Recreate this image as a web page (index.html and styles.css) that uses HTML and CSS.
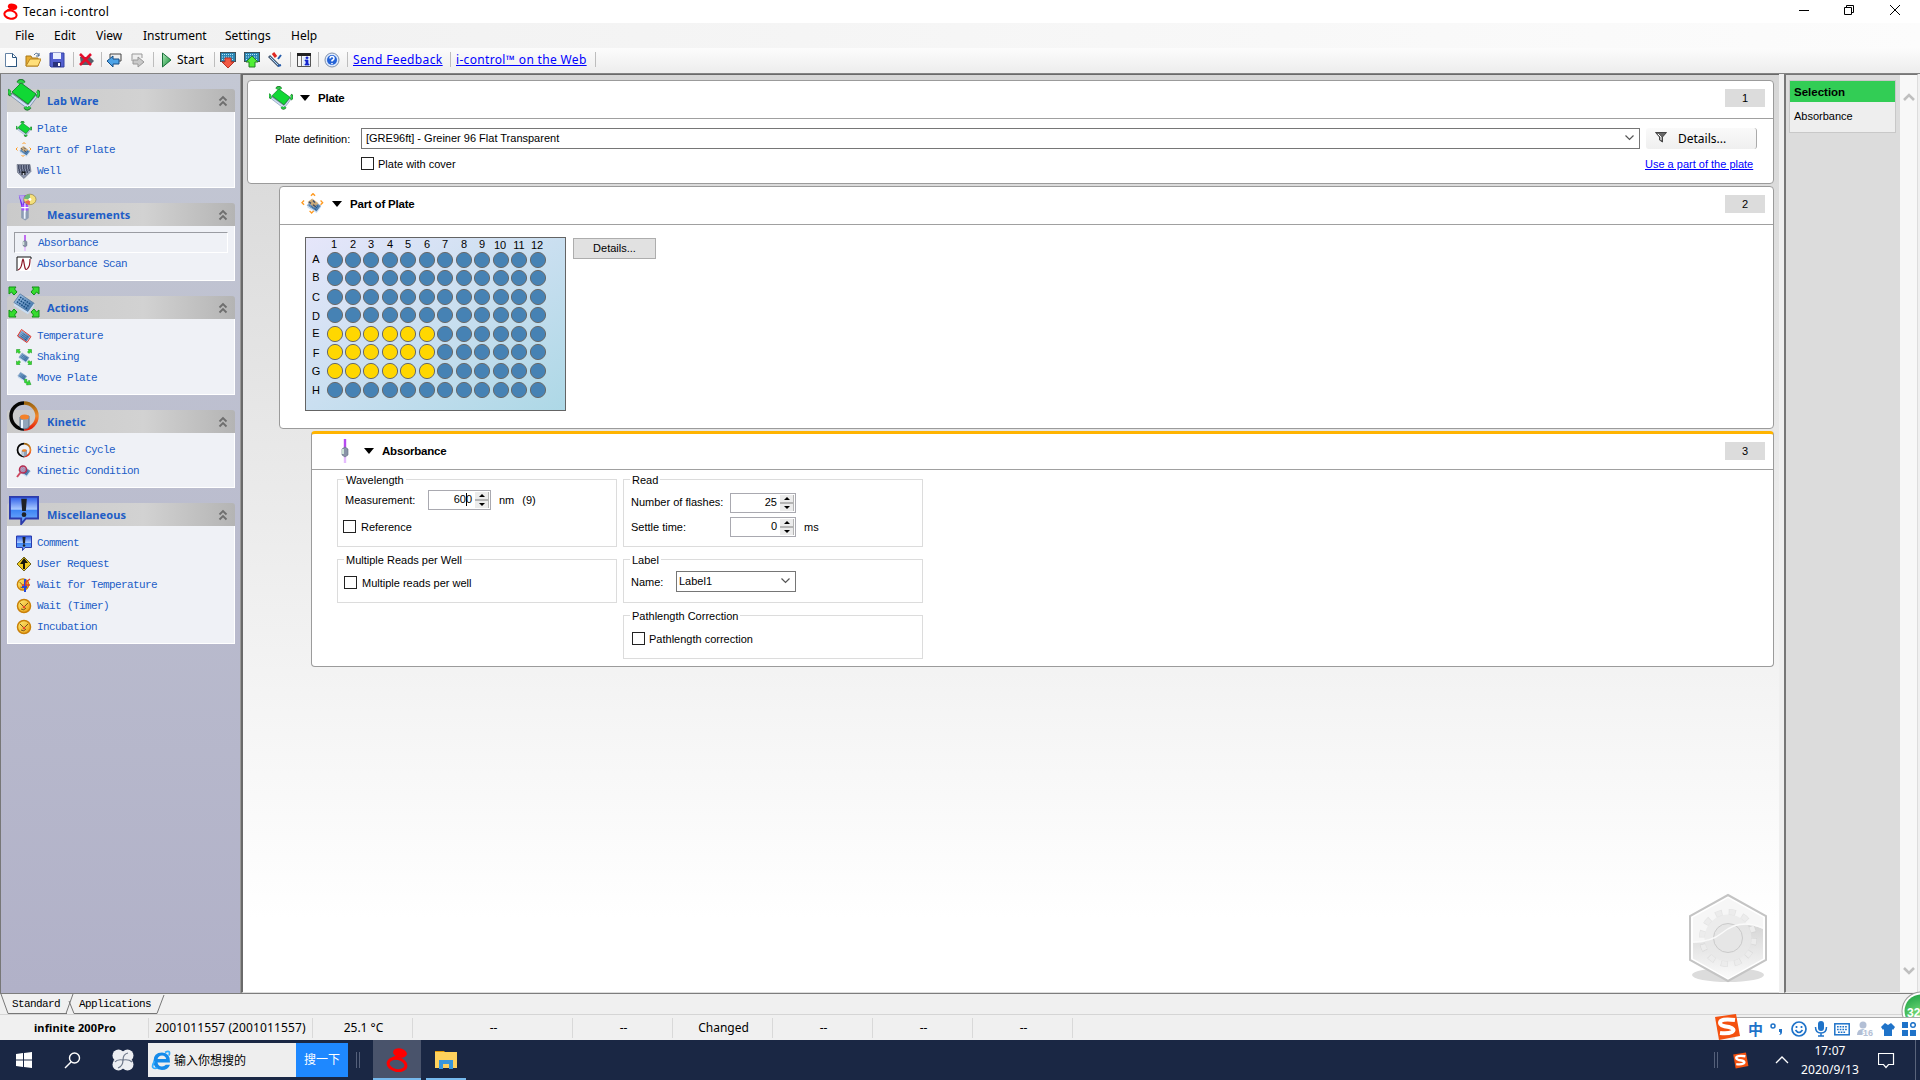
FILE: index.html
```html
<!DOCTYPE html>
<html lang="en">
<head>
<meta charset="utf-8">
<title>Tecan i-control</title>
<link rel="stylesheet" href="styles.css">
</head>
<body>
<svg class="defs" width="0" height="0">
<defs>
<linearGradient id="gSteel" x1="0" y1="0" x2="1" y2="1"><stop offset="0" stop-color="#a9cbee"/><stop offset="1" stop-color="#34699f"/></linearGradient>
<linearGradient id="gBlue" x1="0" y1="0" x2="0" y2="1"><stop offset="0" stop-color="#2a5be8"/><stop offset=".45" stop-color="#a8c8ff"/><stop offset=".5" stop-color="#3f86f5"/><stop offset="1" stop-color="#7db4ff"/></linearGradient>
<linearGradient id="gGold" x1="0" y1="0" x2="1" y2="1"><stop offset="0" stop-color="#fff07a"/><stop offset="1" stop-color="#e89a10"/></linearGradient>
<linearGradient id="gPlay" x1="0" y1="0" x2="1" y2="1"><stop offset="0" stop-color="#b5ecc0"/><stop offset="1" stop-color="#078a2c"/></linearGradient>
<linearGradient id="gWell" x1="0" y1="0" x2="1" y2="1"><stop offset="0" stop-color="#e6e6fa"/><stop offset="1" stop-color="#add8e6"/></linearGradient>
<linearGradient id="gRing" x1="0" y1="0" x2="0" y2="1"><stop offset="0" stop-color="#9a6410"/><stop offset=".5" stop-color="#f0882a"/><stop offset="1" stop-color="#e61c08"/></linearGradient>
<linearGradient id="gHex" x1="0" y1="0" x2="0" y2="1"><stop offset="0" stop-color="#d6d6d6"/><stop offset="1" stop-color="#fafafa"/></linearGradient>
<radialGradient id="gBall" cx=".5" cy=".75" r=".8"><stop offset="0" stop-color="#8ae884"/><stop offset="1" stop-color="#21a447"/></radialGradient>
<symbol id="plate" viewBox="0 0 32 32">
<path d="M13 4 29 16 20 27 3 15Z" fill="#76838a"/><path d="M3 14 20 26 29 15v3L20 30 3 17Z" fill="#cfe0f6" stroke="#7489a3" stroke-width=".8"/><path d="M13 4 28 15 20 25 4 13Z" fill="#10d835" stroke="#178e30"/>
<path d="M10 4q3-5 6 0M2 11q-3 3 1 5M29 12q4 2 0 6M17 28q2 4 5 0" fill="none" stroke="#287d35" stroke-width="3.6"/><path d="M10 4q3-4 6 0M2 11q-2 3 1 5M29 12q3 2 0 6M17 28q2 3 5 0" fill="none" stroke="#26d544" stroke-width="2"/>
</symbol>
<symbol id="tray" viewBox="0 0 32 32"><path d="M11 5 29 17 21 28 3 16Z" fill="url(#gSteel)" stroke="#55779e"/><path d="m11 9 13 9M9 12l13 9M7 15l13 9" stroke="#174b7e" stroke-width="2" stroke-dasharray="2 1.4"/><path d="M3 17v3l18 11 8-11v-3L21 28Z" fill="#c8ddf3"/></symbol>
<symbol id="part" viewBox="0 0 32 32"><use href="#tray" x="5" y="6" width="25" height="24"/><path d="m8 13 7-5 9 7-6 6Z" fill="#d9ad6d" opacity=".85"/><path d="m13 4 3-3 3 3M3 11l-3 3 3 3M27 11l3 3-3 3M11 26l3 3 3-3" fill="none" stroke="#ff9a20" stroke-width="2"/><path d="m10 13 3 2m3-4 3 3m-3 3 4 3" stroke="#374a6c" stroke-width="2"/></symbol>
<symbol id="well" viewBox="0 0 32 32"><path d="M2 3h26l2 14-14 14L3 19Z" fill="#8d96ad" stroke="#4a5061"/><path d="M4 6h23M4 10h24M5 14h23M6 18h20" stroke="#303951" stroke-width="2.600" stroke-dasharray="3 2"/><path d="M11 17h8v7h-8z" fill="#16181d"/><circle cx="15" cy="22" r="2" fill="#d6dce9"/></symbol>
<symbol id="measure" viewBox="0 0 32 48"><path d="M2 4h18l-4 22H7Z" fill="#6c25ee"/><path d="m2 4 7 17 3-17Z" fill="#b8a4f0"/><path d="M6 24h13v19l-6 4-7-4Z" fill="#8d9db4"/><path d="M9 26h3v18" stroke="#eef5ff" stroke-width="3" fill="none"/><path d="M7 20h11v10H7Z" fill="#a54cff"/><path d="M12.500 17v16M6 25h13" stroke="#fff" stroke-width="2"/><ellipse cx="21" cy="11" rx="10.500" ry="9" fill="#f3df7b" stroke="#84702c"/><path d="m21 11-10-1q1-8 10-8Z" fill="#68b97a"/><path d="m21 11-9 4q4 5 9 5Z" fill="#e86c4c"/><circle cx="21" cy="11" r="2.500" fill="#fff"/></symbol>
<symbol id="absorb" viewBox="0 0 16 24"><path d="M8 0v12" stroke="#b54af0" stroke-width="2.400"/><path d="M8 16v8" stroke="#e6bcff" stroke-width="2.400"/><path d="m5 10 3-2 3 2v6l-3 2-3-2Z" fill="#8993a7" stroke="#606b80" stroke-width=".6"/><path d="M6 10v5" stroke="#d5ecdc" stroke-width="1.800"/></symbol>
<symbol id="scan" viewBox="0 0 16 16"><path d="M1 1h14v14H1Z" fill="#fff"/><path d="M1 15V1h14v2" fill="none" stroke="#111"/><path d="M2 14Q5 13 6 7q1-8 2 0l1 5q1 3 3 0 2-2 2-9" fill="none" stroke="#8b1525" stroke-width="1.200"/></symbol>
<symbol id="corner" viewBox="0 0 10 10"><path d="M1 1h7L6.500 3 9 6 6 9 3.500 6 1 8Z" fill="#35dc2e" stroke="#139117"/></symbol>
<symbol id="shake" viewBox="0 0 32 32"><use href="#tray" x="3" y="4" width="26" height="25"/><use href="#corner" width="10" height="10"/><use href="#corner" width="10" height="10" transform="matrix(-1 0 0 1 32 0)"/><use href="#corner" width="10" height="10" transform="matrix(1 0 0 -1 0 32)"/><use href="#corner" width="10" height="10" transform="matrix(-1 0 0 -1 32 32)"/></symbol>
<symbol id="temp" viewBox="0 0 32 32"><use href="#tray" x="1" y="1" width="30" height="30"/><path d="m11 3 19 14-8 12L3 16Z" fill="none" stroke="#e13329" stroke-width="2"/></symbol>
<symbol id="move" viewBox="0 0 32 32"><use href="#tray" x="0" y="1" width="25" height="22"/><path d="m17 18 5 1-1 4 4 1 1-4 4 9-9 1 1-3-5-2Z" fill="#34dc38" stroke="#16941f"/></symbol>
<symbol id="kinetic" viewBox="0 0 32 32"><path d="M16 3a13 13 0 0 0 0 26" fill="none" stroke="#050505" stroke-width="3.500"/><path d="M16 3a13 13 0 0 1 0 26" fill="none" stroke="url(#gRing)" stroke-width="3.500"/><path d="M12 17v10q5 4 9 0V16Z" fill="#91a5bb" stroke="#62758b"/><ellipse cx="16.500" cy="17" rx="4.500" ry="2.500" fill="#f58228"/><path d="M14 20v8" stroke="#eef6ff" stroke-width="2"/></symbol>
<symbol id="condition" viewBox="0 0 32 32"><use href="#tray" x="3" y="1" width="28" height="28"/><circle cx="14" cy="13" r="7" fill="#f29bb6" fill-opacity=".5" stroke="#b52d52" stroke-width="3"/><path d="m9 19-7 9" stroke="#cf4860" stroke-width="4"/></symbol>
<symbol id="comment" viewBox="0 0 32 32"><path d="M1 2h30v23H18l-5 6v-6H1Z" fill="url(#gBlue)" stroke="#2c3bab" stroke-width="2"/><path d="M13 4h6l-1 13h-4Z" fill="#202226"/><circle cx="16" cy="21" r="2.500" fill="#202226"/></symbol>
<symbol id="request" viewBox="0 0 16 16"><path d="m8 1 7 7-7 7-7-7Z" fill="#efc920" stroke="#6e6219"/><path d="m8 2 4 5H9v6H7V8H4Z" fill="#17170d"/></symbol>
<symbol id="timer" viewBox="0 0 16 16"><circle cx="8" cy="8" r="6.500" fill="url(#gGold)" stroke="#c98009" stroke-width="1.500"/><path d="m4 5 4 4 4-4M5 11q3 2 5-1" fill="none" stroke="#74521b"/><circle cx="8" cy="9" r="1.300" fill="#e7472e"/></symbol>
<symbol id="waittemp" viewBox="0 0 16 16"><use href="#timer" width="14" height="15"/><path d="M9 2v13M6 10h5" stroke="#264ad9" stroke-width="2"/><path d="M10 9V5l4-3m-4 6h4" fill="none" stroke="#e3402b" stroke-width="1.500"/></symbol>
<symbol id="tecan" viewBox="0 0 22 24"><ellipse cx="14" cy="5" rx="7" ry="4.500" fill="#f00" transform="rotate(12 14 5)"/><ellipse cx="11" cy="16.500" rx="9" ry="6" fill="none" stroke="#f00" stroke-width="3" transform="rotate(12 11 16.500)"/><path d="M4 13q2-4 9-5" fill="none" stroke="#f00" stroke-width="2"/></symbol>
<symbol id="sogou" viewBox="0 0 28 28"><path d="M2 4 23 1l4 22-21 4Z" fill="#f4510f"/><path d="M22 7Q7 5 7 10q0 3 9 4 7 2 3 5-4 2-12 1" fill="none" stroke="#fff" stroke-width="4"/></symbol>
<symbol id="chev" viewBox="0 0 10 12"><path d="m1.500 5.500 3.500-3.500 3.500 3.500M1.500 10.500 5 7l3.500 3.500" fill="none" stroke="#6e6e6e" stroke-width="1.800"/></symbol>
<symbol id="wellgrid" viewBox="0 0 16 10"><path d="M0 0h16v10H0Z" fill="#2a86b4" stroke="#444" stroke-width="1.500"/><path d="M2 2.500h12M2 5h12M2 7.500h12" stroke="#b6e5fb" stroke-width="1" stroke-dasharray="1 1"/></symbol>
<g id="half"><circle cx="30" r="7.600"/><circle cx="48" r="7.600"/><circle cx="66" r="7.600"/><circle cx="85" r="7.600"/><circle cx="103" r="7.600"/><circle cx="122" r="7.600"/></g>
<g id="half2"><circle cx="140" r="7.600"/><circle cx="159" r="7.600"/><circle cx="177" r="7.600"/><circle cx="196" r="7.600"/><circle cx="214" r="7.600"/><circle cx="233" r="7.600"/></g>
</defs>
</svg>

<div class="window">
<header class="titlebar">
<svg class="logo" width="15" height="17"><use href="#tecan"/></svg><span>Tecan i-control</span>
<svg class="winbtns" width="120" height="23" fill="none" stroke="#000"><path d="M4 10.500h10M49.500 7.500h7v7h-7zM51.500 7V5.500h7v7H57M95 5l10 10m0-10L95 15"/></svg>
</header>
<nav class="menu"><span>File</span><span>Edit</span><span>View</span><span>Instrument</span><span>Settings</span><span>Help</span></nav>
<div class="toolbar">
<svg viewBox="0 0 16 16"><path d="M2.500 1.500h7l4 4v9h-11Z" fill="#fff" stroke="#6482a4"/><path d="M9.500 1.500v4h4M13.500 6v8.500H5" fill="none" stroke="#29547e"/></svg>
<svg viewBox="0 0 16 16"><path d="M1 14V4h5l1 2h6v8Z" fill="#e7ad32" stroke="#a97816"/><path d="m1 14 4-7h11l-3 7Z" fill="#ffdf79" stroke="#b98522"/><path d="M9 3q3-4 5 1m0-3v3h-3" fill="none" stroke="#506e91"/></svg>
<svg viewBox="0 0 16 16"><path d="M1 1h14v14H2l-1-1Z" fill="#5360d0" stroke="#3442a4"/><path d="M4 1h8v6H4Z" fill="#eaf0ff"/><path d="M4 10h8v5H4Z" fill="#29327a"/><path d="M9 11h2v3H9Z" fill="#fff"/></svg>
<i></i>
<svg viewBox="0 0 16 16"><path d="M2 5h10l4 4-4 4H3Z" fill="#57616b"/><path d="m2 2 11 11m0-11L2 13" stroke="#e40d2b" stroke-width="2.600"/></svg>
<i></i>
<svg viewBox="0 0 16 16"><path d="M4 6V2h11v7h-3" fill="#eee" stroke="#444"/><path d="m1 9 6-5v3h6v5H7v3Z" fill="#4da3e7" stroke="#164d84"/></svg>
<svg viewBox="0 0 16 16"><path d="M2 9V2h10v4" fill="#eee" stroke="#999"/><path d="M14 10 8 5v3H3v4h5v3Z" fill="#c9c9c9" stroke="#989898"/></svg>
<i></i>
<svg viewBox="0 0 16 16"><path d="m2.500 1 8.500 7-8.500 7Z" fill="url(#gPlay)" stroke="#1b703b"/></svg>
<span>Start</span>
<i></i>
<svg viewBox="0 0 16 16"><use href="#wellgrid" width="16" height="10"/><path d="M5 6h6v4h3l-6 6-6-6h3Z" fill="#f25a45" stroke="#ba3327"/></svg>
<svg viewBox="0 0 16 16"><use href="#wellgrid" width="16" height="10"/><path d="M5 15h6v-5h3L8 4l-6 6h3Z" fill="#50ef34" stroke="#257f28"/></svg>
<svg viewBox="0 0 16 16"><path d="m2 4 10 10" stroke="#4a5d77" stroke-width="3"/><path d="m3 5 9 9" stroke="#a8d7ff"/><path d="m6 1 3 4" stroke="#df2720" stroke-width="3"/><path d="m11 7 3-4M11 14l3-1" stroke="#265cab" stroke-width="2"/></svg>
<i></i>
<svg viewBox="0 0 16 16"><path d="M1.500 1.500h13v13h-13Z" fill="#f7f7f7" stroke="#555"/><path d="M1 2.500h14" stroke="#222" stroke-width="3"/><path d="M5.500 4v10" stroke="#777"/><path d="M7 5h7v9H7Z" fill="#dceaff"/><path d="M10 5h2v1.500h-2zM9 8h3v4h1v1H9v-1h1V9H9Z" fill="#1525cc" stroke="#1525cc" stroke-width=".7"/></svg>
<i></i>
<svg viewBox="0 0 16 16"><circle cx="8" cy="8" r="7" fill="#dceaff" stroke="#8291aa"/><circle cx="8" cy="8" r="5" fill="#2462d6"/><path d="M6 6.500q0-2 2-2t2 2q0 1-2 2v1M8 11v1.300" fill="none" stroke="#fff" stroke-width="1.500"/></svg>
<i></i>
<a class="fb">Send Feedback</a><i></i><a class="web">i-control™ on the Web</a><i></i>
</div>

<div class="workspace">
<aside class="side">
<section class="grp"><h2><svg class="big" width="32" height="32"><use href="#plate"/></svg>Lab Ware<svg class="up" width="10" height="12"><use href="#chev"/></svg></h2>
<ul><li><svg width="16" height="16"><use href="#plate"/></svg>Plate</li><li><svg width="16" height="16"><use href="#part"/></svg>Part of Plate</li><li><svg width="16" height="16"><use href="#well"/></svg>Well</li></ul></section>
<section class="grp"><h2><svg class="big tube" width="22" height="28" preserveAspectRatio="none"><use href="#measure"/></svg>Measurements<svg class="up" width="10" height="12"><use href="#chev"/></svg></h2>
<ul><li class="sel"><svg width="16" height="16"><use href="#absorb"/></svg>Absorbance</li><li><svg width="16" height="16"><use href="#scan"/></svg>Absorbance Scan</li></ul></section>
<section class="grp"><h2><svg class="big" width="32" height="32"><use href="#shake"/></svg>Actions<svg class="up" width="10" height="12"><use href="#chev"/></svg></h2>
<ul><li><svg width="16" height="16"><use href="#temp"/></svg>Temperature</li><li><svg width="16" height="16"><use href="#shake"/></svg>Shaking</li><li><svg width="16" height="16"><use href="#move"/></svg>Move Plate</li></ul></section>
<section class="grp"><h2><svg class="big" width="32" height="32"><use href="#kinetic"/></svg>Kinetic<svg class="up" width="10" height="12"><use href="#chev"/></svg></h2>
<ul><li><svg width="16" height="16"><use href="#kinetic"/></svg>Kinetic Cycle</li><li><svg width="16" height="16"><use href="#condition"/></svg>Kinetic Condition</li></ul></section>
<section class="grp"><h2><svg class="big" width="32" height="30"><use href="#comment"/></svg>Miscellaneous<svg class="up" width="10" height="12"><use href="#chev"/></svg></h2>
<ul><li><svg width="16" height="16"><use href="#comment"/></svg>Comment</li><li><svg width="16" height="16"><use href="#request"/></svg>User Request</li><li><svg width="16" height="16"><use href="#waittemp"/></svg>Wait for Temperature</li><li><svg width="16" height="16"><use href="#timer"/></svg>Wait (Timer)</li><li><svg width="16" height="16"><use href="#timer"/></svg>Incubation</li></ul></section>
</aside>

<main class="canvas">
<section class="card c1">
<header><svg class="ico" width="24" height="24"><use href="#plate"/></svg><b class="tri"></b><h3>Plate</h3><span class="num">1</span></header>
<div class="platedef">
<label>Plate definition:</label>
<div class="select wide">[GRE96ft] - Greiner 96 Flat Transparent<svg width="9" height="6"><path d="m.5.500 4 4 4-4" fill="none" stroke="#555" stroke-width="1.200"/></svg></div>
<div class="softbtn"><svg width="12" height="11"><path d="M.5.500h11L7.500 5v5L4.500 8V5Z" fill="#666" stroke="#444"/><path d="m3 2 3 3v3" stroke="#fff" fill="none"/></svg>Details...</div>
<div class="check withcover"><b class="box"></b>Plate with cover</div>
<a class="partlink">Use a part of the plate</a>
</div>
</section>
<section class="card c2">
<header><svg class="ico" width="24" height="22"><use href="#part"/></svg><b class="tri"></b><h3>Part of Plate</h3><span class="num">2</span></header>
<div class="platearea">
<svg class="wells" width="261" height="174">
<rect x=".5" y=".5" width="260" height="173" fill="url(#gWell)" stroke="#646464"/>
<g fill="#4682b4" stroke="#696969">
<use href="#half" y="23"/><use href="#half" y="41"/><use href="#half" y="60"/><use href="#half" y="78"/><use href="#half" y="153"/>
<use href="#half2" y="23"/><use href="#half2" y="41"/><use href="#half2" y="60"/><use href="#half2" y="78"/><use href="#half2" y="97"/><use href="#half2" y="115"/><use href="#half2" y="134"/><use href="#half2" y="153"/></g>
<g fill="#ffd700" stroke="#696969"><use href="#half" y="97"/><use href="#half" y="115"/><use href="#half" y="134"/></g>
<g class="wl"><text x="29" y="11">1</text><text x="48" y="11">2</text><text x="66" y="11">3</text><text x="85" y="11">4</text><text x="103" y="11">5</text><text x="122" y="11">6</text><text x="140" y="11">7</text><text x="159" y="11">8</text><text x="177" y="11">9</text><text x="195" y="12">10</text><text x="214" y="12">11</text><text x="232" y="12">12</text>
<text x="11" y="26">A</text><text x="11" y="44">B</text><text x="11" y="64">C</text><text x="11" y="83">D</text><text x="11" y="100">E</text><text x="11" y="120">F</text><text x="11" y="138">G</text><text x="11" y="157">H</text></g>
</svg>
<div class="btn">Details...</div>
</div>
</section>
<section class="card c3">
<header><svg class="ico" width="24" height="24"><use href="#absorb"/></svg><b class="tri"></b><h3>Absorbance</h3><span class="num">3</span></header>
<div class="groups">
<div class="col">
<div class="fs tall"><span class="lg">Wavelength</span>
<div class="row r1"><label class="w83">Measurement:</label><div class="spin s63"><span>60<i class="caret"></i>0</span><b><i></i><i></i></b></div><span class="nm">nm</span><span class="nine">(9)</span></div>
<div class="row r2 check"><b class="box"></b>Reference</div></div>
<div class="fs short"><span class="lg">Multiple Reads per Well</span><div class="row check mr"><b class="box"></b>Multiple reads per well</div></div>
</div>
<div class="col read">
<div class="fs tall"><span class="lg">Read</span>
<div class="row f1"><label class="w99 raised">Number of flashes:</label><div class="spin s66"><span>25</span><b><i></i><i></i></b></div></div>
<div class="row f2"><label class="w99">Settle time:</label><div class="spin s66"><span>0</span><b><i></i><i></i></b></div><span class="nm">ms</span></div></div>
<div class="fs short"><span class="lg">Label</span><div class="row name"><label class="w45">Name:</label><div class="select lab">Label1<svg width="9" height="6"><path d="m.5.500 4 4 4-4" fill="none" stroke="#555" stroke-width="1.200"/></svg></div></div></div>
<div class="fs short"><span class="lg">Pathlength Correction</span><div class="row check pl"><b class="box"></b>Pathlength correction</div></div>
</div>
</div>
</section>
<svg class="hex" width="82" height="92">
<ellipse cx="41" cy="82" rx="36" ry="7" fill="#dcdcdc"/>
<path d="m41 2 38 21v44L41 88 3 67V23Z" fill="#fff" stroke="#c4c4c4" stroke-width="2"/>
<path d="m41 5 35 19.500v41L41 85 6 65.500v-41Z" fill="#f6f6f6"/>
<path d="M6 50q18 0 29-9 18-15 41-5v29.500L41 85 6 65.500Z" fill="url(#gHex)"/>
<circle cx="41" cy="45" r="26" fill="none" stroke="#cdcdcd" stroke-width="6" stroke-dasharray="7 6.610" opacity=".45"/>
<circle cx="41" cy="45" r="26" fill="none" stroke="#ececec" stroke-width="5" stroke-dasharray="5.600 8.010" stroke-dashoffset="-.7"/>
<circle cx="41" cy="45" r="23.500" fill="#e8e8e8" opacity=".75"/>
<circle cx="41" cy="45" r="14.500" fill="#e6e6e6" stroke="#cacaca"/>
<path d="M6 49q18 0 29-9 18-15 41-5" fill="none" stroke="#fafafa" stroke-width="1.500"/>
</svg>
</main>
<aside class="right">
<div class="selbox"><h4>Selection</h4><p>Absorbance</p></div>
<div class="scroll"><svg width="12" height="9"><path d="m1 7 5-5 5 5" fill="none" stroke="#bfbfbf" stroke-width="2.600"/></svg><svg width="12" height="9"><path d="m1 2 5 5 5-5" fill="none" stroke="#bfbfbf" stroke-width="2.600"/></svg></div>
</aside>
</div>

<div class="tabs"><svg width="170" height="21" fill="none" stroke="#777"><path d="m1 0 7 19.500h59M73 0l-7 19.500M69 7l5 12.500h83L164 1"/></svg><span class="t1">Standard</span><span class="t2">Applications</span></div>
<div class="status"><span class="dev">infinite 200Pro</span><span class="serial">2001011557 (2001011557)</span><span>25.1 °C</span><span>--</span><span>--</span><span>Changed</span><span>--</span><span>--</span><span>--</span></div>
<footer class="taskbar">
<svg class="win" width="16" height="16" fill="#fff"><path d="m0 2 7-1v6.500H0ZM8 1l8-1v7.500H8ZM0 8.500h7V15l-7-1ZM8 8.500h8V16l-8-1Z"/></svg>
<svg class="mag" width="17" height="17" fill="none" stroke="#fff" stroke-width="1.400"><circle cx="10.500" cy="6" r="5"/><path d="m7 10-6 6"/></svg>
<svg class="swirl" width="22" height="22"><g fill="#eceef2"><circle cx="6.500" cy="6.500" r="6"/><circle cx="15.500" cy="6.500" r="6"/><circle cx="6.500" cy="15.500" r="6"/><circle cx="15.500" cy="15.500" r="6"/></g><path d="M11 11Q5 10 3 13m8-2q0-6 5-7m-5 7q6-1 9 2m-9-2q0 6-5 8" fill="none" stroke="#6c7688" stroke-width="1.200"/></svg>
<div class="search"><svg width="20" height="20"><path d="M19 12.500H6.500q.8 4 4.500 4 2.500 0 3.800-1.800H19Q17 20 11 20q-8.500-.5-8.500-9T11 2.500q8.500.5 8 10ZM6.500 9h8.700q-.7-3.500-4.200-3.500T6.500 9" fill="#168bea" fill-rule="evenodd"/><path d="M14 2.500q6-3 4 3M3.500 11q-5 9 3 7" fill="none" stroke="#32adff" stroke-width="1.800"/></svg><span>输入你想搜的</span></div><div class="go">搜一下</div><i class="grip"></i>
<div class="app"><svg width="22" height="24"><use href="#tecan"/></svg></div>
<div class="folder"><svg width="22" height="20"><path d="M0 1h9l2 2H0Z" fill="#e59b05"/><path d="M0 2h22v16H0Z" fill="#ffd15c"/><path d="M4 19V10h14v9h-4v-5H8v5Z" fill="#3796dc"/></svg></div>
<i class="grip g2"></i><svg class="s2" width="17" height="17"><use href="#sogou"/></svg>
<svg class="chup" width="14" height="8"><path d="m1 7 6-6 6 6" fill="none" stroke="#fff" stroke-width="1.300"/></svg>
<div class="clock">17:07<br>2020/9/13</div>
<svg class="note" width="17" height="17"><path d="M.5 1.500h15v11h-5l-2.500 3-2.500-3h-5Z" fill="none" stroke="#fff" stroke-width="1.200"/></svg><i class="desk"></i>
</footer>
</div>
<svg class="ball" width="40" height="40" viewBox="0 0 40 40"><circle cx="20" cy="20" r="19.500" fill="#999"/><circle cx="20" cy="20" r="18.500" fill="#fff"/><circle cx="20" cy="20" r="16.500" fill="url(#gBall)"/><text x="6" y="26">32</text></svg>
<div class="ime"><svg class="imes" width="28" height="28"><use href="#sogou"/></svg><span>中</span>
<svg width="14" height="16"><circle cx="3" cy="5" r="2" fill="none" stroke="#1f73c9" stroke-width="1.500"/><path d="M9 8h3v3q0 3-3 3 2-1 1-3H9Z" fill="#1f73c9"/></svg>
<svg width="16" height="16" fill="none" stroke="#1f73c9" stroke-width="1.700"><circle cx="8" cy="8" r="7"/><path d="M4.500 9q3.500 5 7 0M5.500 5v2M10.500 5v2"/></svg>
<svg width="14" height="16"><rect x="4" width="6" height="10" rx="3" fill="#1f73c9"/><path d="M1.500 6q0 6 5.500 6t5.500-6M7 12v3M4 15h6" fill="none" stroke="#1f73c9" stroke-width="1.500"/></svg>
<svg width="16" height="13"><rect x=".8" y=".8" width="14.400" height="11" fill="none" stroke="#1f73c9" stroke-width="1.500"/><path d="M3 3.800h10M3 6.500h10M4 9.200h8" stroke="#1f73c9" stroke-width="1.500" stroke-dasharray="1.700 1"/></svg>
<svg width="17" height="16" fill="#b3bfd5"><circle cx="6" cy="4" r="3.500"/><path d="M0 14q0-6 6-6 4 0 5 3v3Z"/><text class="sixteen" x="6" y="15">16</text></svg>
<svg width="14" height="14"><path d="m4 1 3 2 3-2 4 4-2 3-1-1v7H3V7L2 8 0 5Z" fill="#1f73c9"/></svg>
<svg width="14" height="14" fill="#1f73c9"><path d="M0 0h6v6H0zM0 8h6v6H0zM8 8h6v6H8z"/><circle cx="11" cy="3" r="2.300" fill="none" stroke="#1f73c9" stroke-width="1.500"/></svg>
</div>
</body>
</html>
```
FILE: styles.css
```css
* { box-sizing: border-box; }
body { margin: 0; width: 1920px; height: 1080px; overflow: hidden; position: relative; background: #f0f0f0; color: #000; font-family: "Liberation Sans", Arial, sans-serif; font-size: 11px; }
h2, h3, h4, p, ul { margin: 0; padding: 0; }
svg { display: block; flex: none; }
.defs { position: absolute; }
a { color: #00f; text-decoration: underline; }
.window { display: flex; flex-direction: column; width: 1920px; height: 1080px; }

.titlebar { height: 23px; background: #fff; display: flex; align-items: center; padding: 0 0 1px 3px; font: 12px "Noto Sans", sans-serif; letter-spacing: .25px; }
.titlebar .logo { margin-right: 5px; }
.winbtns { margin-left: auto; margin-right: 5px; }
.menu { height: 25px; display: grid; grid-template-columns: 39px 42px 47px 82px 66px 60px; align-items: center; padding-left: 15px; background: linear-gradient(90deg, #f0f0f0, #fcfcfc); font: 12px "Noto Sans", sans-serif; }
.toolbar { height: 25px; display: grid; grid-template-columns: 22px 24px 24px 5px 23px 5px 24px 23px 7px 17px 37px 6px 24px 23px 23px 6px 22px 6px 23px 6px 97px 6px 139px 6px; align-items: center; padding: 0 0 2px 3px; background: linear-gradient(#fcfcfc, #ededed); font: 12px "Noto Sans", sans-serif; white-space: nowrap; }
.toolbar svg { width: 16px; height: 16px; }
.toolbar i { width: 1px; height: 15px; background: #bdbdbd; }
.fb { letter-spacing: .38px; }
.web { letter-spacing: .33px; }

.workspace { height: 920px; display: flex; border-top: 1px solid #838383; background: #f0f0f0; }
.side { width: 241px; border-left: 1px solid #777; border-right: 1px solid #999; padding: 15px 5px 0 6px; background: linear-gradient(#c4c8d4, #b1b1c8); display: flex; flex-direction: column; gap: 15px; }
.grp h2 { height: 23px; display: flex; align-items: center; padding: 0 7px 0 40px; position: relative; border-radius: 3px 3px 0 0; background: linear-gradient(90deg, #cacaca, #d2d2d2 60%, #b4b4b4); color: #215dc6; font: bold 11px "Noto Sans", sans-serif; letter-spacing: .1px; }
.big { position: absolute; left: 1px; bottom: 1px; }
.tube { left: 9px; bottom: 5px; }
.up { margin-left: auto; }
.grp ul { list-style: none; background: #eff1f6; border: 1px solid #fff; border-top: 0; padding: 6px 6px 6px; }
.grp li { height: 21px; display: flex; align-items: center; gap: 5px; padding-left: 2px; color: #215dc6; font: 11px "Liberation Mono", monospace; letter-spacing: -.6px; white-space: nowrap; }
.grp li.sel { border: 1px solid #fff; border-top-color: #9a9ca2; border-left-color: #9a9ca2; }

.canvas { width: 1538px; padding: 5px 5px 0 4px; border-left: 2px solid #6a6a6a; border-top: 1px solid #696969; border-bottom: 1px solid #ddd; background: linear-gradient(#d6d6d6, #fff 92%); position: relative; }
.card { background: #fff; border: 1px solid #9b9b9b; border-radius: 4px; }
.card > header { height: 38px; display: flex; align-items: center; border-bottom: 1px solid #a0a0a0; padding: 0 8px 4px 21px; }
.ico { width: 24px; }
.tri { border: 5px solid transparent; border-top: 6px solid #000; border-bottom: 0; margin: 0 8px 0 7px; }
h3 { font-size: 11.500px; letter-spacing: -.2px; }
.num { margin-left: auto; width: 40px; height: 18px; line-height: 18px; background: #dcdcdc; text-align: center; }
.c1 { height: 104px; }
.c2 { margin: 2px 0 0 32px; height: 243px; }
.c3 { margin: 2px 0 0 64px; height: 236px; border-top: 3px solid #ffb400; }
.c3 > header { height: 36px; padding-bottom: 2px; }
.platedef { display: grid; grid-template-columns: 80px 1279px 111px; column-gap: 6px; padding: 9px 0 0 27px; row-gap: 5px; align-items: center; }
.platedef label { white-space: nowrap; }
.select { height: 21px; border: 1px solid #767676; background: #fff; display: flex; align-items: center; justify-content: space-between; padding: 0 5px 1px 4px; }
.softbtn { height: 21px; display: flex; align-items: center; gap: 11px; padding-left: 9px; border-radius: 3px; border-right: 1px solid #aaa; background: linear-gradient(#fafafa, #efefef); font: 12px "Noto Sans", sans-serif; }
.softbtn svg { margin-top: -3px; }
.check { display: flex; align-items: center; gap: 4px; }
.box { width: 13px; height: 13px; border: 1px solid #222; background: #fff; }
.withcover { grid-column: 2; height: 19px; }
.partlink { font-size: 11px; margin-left: -1px; white-space: nowrap; }
.platearea { display: flex; align-items: flex-start; gap: 7px; padding: 12px 0 0 25px; }
.wl { font-size: 11px; text-anchor: middle; }
.btn { margin-top: 1px; width: 83px; height: 21px; border: 1px solid #adadad; background: #e1e1e1; line-height: 18px; text-align: center; }

.groups { display: flex; gap: 6px; padding: 9px 0 0 25px; }
.col { width: 280px; display: flex; flex-direction: column; gap: 12px; }
.read { width: 300px; }
.fs { border: 1px solid #dcdcdc; display: flex; flex-direction: column; }
.tall { height: 68px; }
.short { height: 44px; }
.lg { align-self: flex-start; margin: -7px 0 0 6px; padding: 0 2px; height: 14px; line-height: 15px; background: #fff; white-space: nowrap; }
.row { display: flex; align-items: center; white-space: nowrap; flex: none; }
.r1 { padding-left: 7px; height: 20px; margin-top: 3px; }
.r2 { padding-left: 5px; margin-top: 10px; }
.r2.check, .mr { gap: 5px; }
.mr { padding-left: 6px; margin-top: 9px; }
.f1 { padding-left: 7px; margin-top: 6px; height: 20px; }
.f2 { padding-left: 7px; margin-top: 4px; height: 20px; }
.name { padding-left: 7px; margin-top: 4px; }
.pl { padding-left: 8px; margin-top: 9px; }
.w83 { width: 83px; }
.w99 { width: 99px; }
.w45 { width: 45px; }
.raised { margin-top: -2px; }
.lab { width: 120px; padding-left: 2px; }
.spin { height: 20px; border: 1px solid #a9a9b0; display: flex; align-items: center; justify-content: flex-end; background: #fff; padding: 1px; }
.s63 { width: 63px; }
.s66 { width: 66px; }
.spin span { display: flex; padding: 0 3px 2px 0; }
.spin b { width: 14px; height: 16px; display: flex; flex-direction: column; gap: 2px; background: #b4b4b4; }
.spin b i { flex: 1; background: #ececec; border-right: 1px solid #b4b4b4; display: flex; align-items: center; justify-content: center; }
.spin b i::after { content: ""; border: 3px solid transparent; border-bottom-color: #000; border-top: 0; }
.spin b i + i::after { border: 3px solid transparent; border-top-color: #000; border-bottom: 0; }
.caret { width: 1px; height: 13px; margin: 0 -1px 0 0; background: #000; }
.nm { margin-left: 8px; }
.nine { margin-left: 8px; }
.hex { position: absolute; right: 10px; bottom: 7px; }

.right { margin-left: 5px; width: 134px; border: 1px solid #777; border-left-width: 2px; border-bottom-color: #eee; border-right-color: #ddd; background: #dcdcdc; display: flex; }
.selbox { margin: 5px 0 0 3px; width: 107px; height: 53px; border: 1px solid #c8c8c8; background: #eee; }
h4 { height: 21px; line-height: 22px; padding-left: 4px; font-size: 11.500px; background: #32cd55; }
.selbox p { padding: 8px 0 0 4px; }
.scroll { margin-left: auto; width: 17px; background: #f8f8f8; display: flex; flex-direction: column; justify-content: space-between; padding: 18px 2px 17px 3px; }

.tabs { height: 21px; border-top: 1px solid #7d7d7d; display: grid; grid-template-columns: 12px 67px 100px; align-items: center; background: #f0f0f0; font: 11px "Liberation Mono", monospace; letter-spacing: -.6px; }
.tabs svg { grid-area: 1 / 1 / 2 / 4; }
.t1 { grid-area: 1 / 2; }
.t2 { grid-area: 1 / 3; }
.tabs span { padding-bottom: 2px; }
.status { height: 26px; border-top: 1px solid #d5d5d5; display: grid; grid-template-columns: 149px 164px 100px 160px repeat(5, 100px); align-items: center; font: 12px "Noto Sans", sans-serif; text-align: center; white-space: nowrap; }
.status span { height: 20px; line-height: 20px; padding-left: 2px; border-right: 1px solid #d9d9d9; }
.status .serial { letter-spacing: .13px; padding-left: 0; }
.status .dev { font: bold 11px/20px "Noto Sans", sans-serif; letter-spacing: .15px; }
.taskbar { height: 40px; background: #1a2744; color: #fff; display: flex; align-items: center; padding-left: 16px; font: 12px "Noto Sans", "Noto Sans CJK SC", sans-serif; }
.mag { margin-left: 32px; }
.swirl { margin-left: 31px; }
.search { margin-left: 14px; width: 148px; height: 34px; background: #eee; color: #000; display: flex; align-items: center; gap: 3px; padding-left: 3px; }
.go { width: 52px; height: 34px; line-height: 33px; text-align: center; background: #1e88ff; }
.grip { width: 4px; height: 16px; margin-left: 8px; border: 1px solid #55607a; border-width: 0 1px; }
.app { margin-left: 13px; width: 48px; height: 40px; padding: 8px 0 0 13px; background: #49536b; border-bottom: 2px solid #76b9ed; }
.folder { margin-left: 5px; width: 40px; height: 40px; padding: 10px 0 0 9px; border-bottom: 2px solid #76b9ed; }
.g2 { margin-left: auto; }
.s2 { margin-left: 14px; }
.chup { margin-left: 26px; }
.clock { margin-left: 9px; width: 64px; line-height: 19px; text-align: center; letter-spacing: .1px; }
.note { margin-left: 16px; }
.desk { width: 1px; height: 40px; background: #5a647b; margin: 0 4px 0 20px; }

.ball { position: absolute; left: 1901px; top: 991px; }
.ball text { font: bold 12px "Liberation Sans", sans-serif; fill: #fff; }
.ime { position: absolute; left: 1735px; top: 1017px; width: 185px; height: 23px; background: #fff; border-top: 1px solid #aaa; display: flex; align-items: center; justify-content: space-between; padding: 0 4px 0 13px; }
.ime span { color: #1f73c9; font: bold 15px/20px "Noto Sans CJK SC", sans-serif; }
.imes { position: absolute; left: -22px; top: -5px; }
.sixteen { font: bold 9px "Liberation Sans", sans-serif; stroke: #fff; stroke-width: 2px; paint-order: stroke; }
```
